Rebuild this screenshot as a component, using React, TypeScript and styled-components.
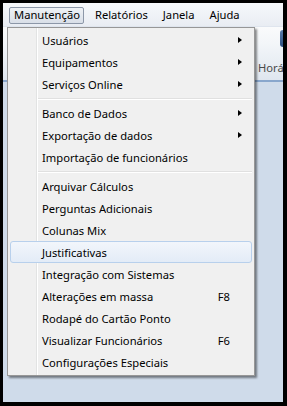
import React from "react";
import styled, { createGlobalStyle } from "styled-components";

const GlobalStyle = createGlobalStyle`
  html, body {
    margin: 0;
    padding: 0;
    background: #000;
  }
  body {
    font-family: "Noto Sans", "Open Sans", "DejaVu Sans", sans-serif;
    font-size: 11.2px;
    color: #000;
  }
`;

const Frame = styled.div`
  width: 287px;
  height: 406px;
  box-sizing: border-box;
  padding: 3px 4px 4px 3px;
  background: #000;
`;

const Window = styled.div`
  position: relative;
  height: 100%;
  display: flex;
  flex-direction: column;
  overflow: hidden;
  background: #cfdbea;
`;

const MenuBar = styled.div`
  height: 24px;
  flex: none;
  display: flex;
  align-items: center;
  padding: 1px 0 0 6px;
  box-sizing: border-box;
  background: linear-gradient(#f6f8fb, #e9edf3);
  border-bottom: 1px solid #dfe5ee;
`;

const BarItem = styled.div<{ $open?: boolean }>`
  height: 17px;
  box-sizing: border-box;
  display: flex;
  align-items: center;
  padding: 0 3px 1px 4px;
  margin-right: 6px;
  border: 1px solid ${p => (p.$open ? "#8c97a8" : "transparent")};
  border-radius: 2px;
  background: ${p =>
    p.$open ? "linear-gradient(#eef1f5, #d9dfe8)" : "transparent"};
  line-height: 1;
`;

const Ribbon = styled.div`
  height: 53px;
  flex: none;
  display: flex;
  align-items: flex-end;
  padding-left: 255px;
  background: linear-gradient(#fafbfc 0, #f3f6f9 30%, #dfe6ef 100%);
  border-bottom: 2px solid #88a6cc;
`;

const RibbonTab = styled.div`
  position: relative;
  padding: 0 0 5px 0;
  color: #4a4a4a;
  white-space: nowrap;
`;

const TabButton = styled.div`
  position: absolute;
  left: 22px;
  top: -30px;
  width: 16px;
  height: 17px;
  border-radius: 3px;
  background: linear-gradient(#5a7cab, #2e4f80);
`;

const Workspace = styled.div`
  flex: 1;
  background: #cfdbea;
`;

const Dropdown = styled.div`
  position: absolute;
  left: 4px;
  top: 24px;
  width: 248px;
  box-sizing: border-box;
  padding: 1px 2px 2px;
  border: 1px solid #979797;
  background: linear-gradient(
    to right,
    #f0f0f0 0 28px,
    #e2e3e3 28px 29px,
    #ffffff 29px 30px,
    #f0f0f0 30px
  );
  box-shadow: 2px 2px 2px rgba(0, 0, 0, 0.45);
`;

const Item = styled.div<{ $hot?: boolean }>`
  height: 22px;
  box-sizing: border-box;
  display: grid;
  grid-template-columns: 1fr auto 20px;
  align-items: center;
  padding-left: 31px;
  border: 1px solid ${p => (p.$hot ? "#b8d0ec" : "transparent")};
  border-radius: 3px;
  background: ${p =>
    p.$hot ? "linear-gradient(#f2f6fb, #e3ecf7)" : "transparent"};
  white-space: nowrap;
`;

const Shortcut = styled.span`
  padding-right: 1px;
`;

const Arrow = styled.span`
  justify-self: start;
  margin-left: 7px;
  width: 0;
  height: 0;
  border-top: 3.5px solid transparent;
  border-bottom: 3.5px solid transparent;
  border-left: 4px solid #000;
`;

const Separator = styled.div`
  height: 7px;
  display: flex;
  align-items: center;
  padding-left: 28px;

  &::after {
    content: "";
    flex: 1;
    box-sizing: border-box;
    height: 2px;
    border-top: 1px solid #e0e0e0;
    border-bottom: 1px solid #ffffff;
  }
`;

type Entry =
  | { label: string; sub?: boolean; key?: string; hot?: boolean }
  | "sep";

const entries: Entry[] = [
  { label: "Usuários", sub: true },
  { label: "Equipamentos", sub: true },
  { label: "Serviços Online", sub: true },
  "sep",
  { label: "Banco de Dados", sub: true },
  { label: "Exportação de dados", sub: true },
  { label: "Importação de funcionários" },
  "sep",
  { label: "Arquivar Cálculos" },
  { label: "Perguntas Adicionais" },
  { label: "Colunas Mix" },
  { label: "Justificativas", hot: true },
  { label: "Integração com Sistemas" },
  { label: "Alterações em massa", key: "F8" },
  { label: "Rodapé do Cartão Ponto" },
  { label: "Visualizar Funcionários", key: "F6" },
  { label: "Configurações Especiais" },
];

export default function App() {
  return (
    <>
      <GlobalStyle />
      <Frame>
        <Window>
          <MenuBar>
            <BarItem $open>Manutenção</BarItem>
            <BarItem>Relatórios</BarItem>
            <BarItem>Janela</BarItem>
            <BarItem>Ajuda</BarItem>
          </MenuBar>
          <Ribbon>
            <RibbonTab>
              <TabButton />
              Horário
            </RibbonTab>
          </Ribbon>
          <Workspace />

          <Dropdown>
            {entries.map((e, i) =>
              e === "sep" ? (
                <Separator key={i} />
              ) : (
                <Item key={i} $hot={e.hot}>
                  <span>{e.label}</span>
                  <Shortcut>{e.key}</Shortcut>
                  {e.sub ? <Arrow /> : <span />}
                </Item>
              )
            )}
          </Dropdown>
        </Window>
      </Frame>
    </>
  );
}
